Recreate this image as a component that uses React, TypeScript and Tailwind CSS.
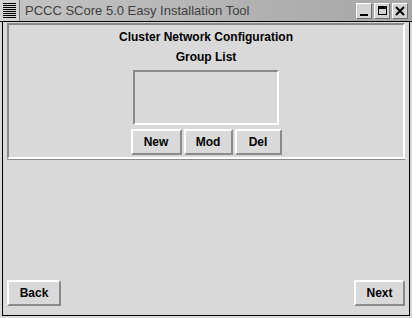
import React from "react";

const font = { fontFamily: '"Liberation Sans", Arial, sans-serif' };

function Bevel({ label, className }: { label: string; className?: string }) {
  return (
    <button
      className={
        "h-[26px] bg-[#d9d9d9] border-2 border-t-white border-l-white border-b-[#8a8a8a] border-r-[#8a8a8a] text-[12px] font-bold text-black flex items-center justify-center " +
        (className ?? "")
      }
    >
      {label}
    </button>
  );
}

function TitleButton({ children }: { children: React.ReactNode }) {
  return (
    <div className="w-[16px] h-[16px] bg-[#d4d4d4] border border-t-white border-l-white border-b-[#6e6e6e] border-r-[#6e6e6e] flex items-center justify-center">
      {children}
    </div>
  );
}

export default function App() {
  return (
    <div className="w-[412px] h-[318px] bg-[#d9d9d9] flex flex-col" style={font}>
      {/* title bar */}
      <div className="h-[22px] flex items-stretch border-b border-black bg-gradient-to-r from-[#c4c4c4] to-[#a6a6a6]">
        <div className="w-[20px] bg-[#d4d4d4] border-r border-[#777] flex flex-col justify-center items-center gap-[1px]">
          {Array.from({ length: 8 }).map((_, i) => (
            <div key={i} className="w-[13px] h-[1px] bg-black" />
          ))}
        </div>
        <div className="flex-1 pl-[5px] flex items-center text-[13px] text-[#404040]">
          PCCC SCore 5.0 Easy Installation Tool
        </div>
        <div className="flex items-center gap-[2px] pr-[4px]">
          <TitleButton>
            <div className="w-[8px] h-[2px] bg-black mt-[8px]" />
          </TitleButton>
          <TitleButton>
            <div className="w-[9px] h-[9px] border border-t-[3px] border-black" />
          </TitleButton>
          <TitleButton>
            <svg width="10" height="10" viewBox="0 0 10 10">
              <path d="M1 1 L9 9 M9 1 L1 9" stroke="black" strokeWidth="2" />
            </svg>
          </TitleButton>
        </div>
      </div>

      {/* client area */}
      <div className="flex-1 flex px-[2px] pb-[2px]">
        <div className="flex-1 flex flex-col border-x border-b border-black px-[4px] pt-[1px] pb-[9px]">
          <div className="border-b border-[#8a8a8a]">
            <div className="h-[136px] border-2 border-t-[#8a8a8a] border-l-[#8a8a8a] border-b-white border-r-white flex flex-col items-center">
              <div className="mt-[5px] text-[12px] font-bold text-black leading-[14px]">
                Cluster Network Configuration
              </div>
              <div className="mt-[6px] text-[12px] font-bold text-black leading-[14px]">
                Group List
              </div>
              <div className="mt-[6px] w-[146px] h-[55px] border-2 border-t-[#8a8a8a] border-l-[#8a8a8a] border-b-white border-r-white" />
              <div className="mt-[4px] flex gap-[2px]">
                <Bevel label="New" className="w-[51px]" />
                <Bevel label="Mod" className="w-[49px]" />
                <Bevel label="Del" className="w-[47px]" />
              </div>
            </div>
          </div>
          <div className="flex-1" />
          <div className="flex justify-between">
            <Bevel label="Back" className="w-[54px]" />
            <Bevel label="Next" className="w-[51px]" />
          </div>
        </div>
      </div>
    </div>
  );
}
